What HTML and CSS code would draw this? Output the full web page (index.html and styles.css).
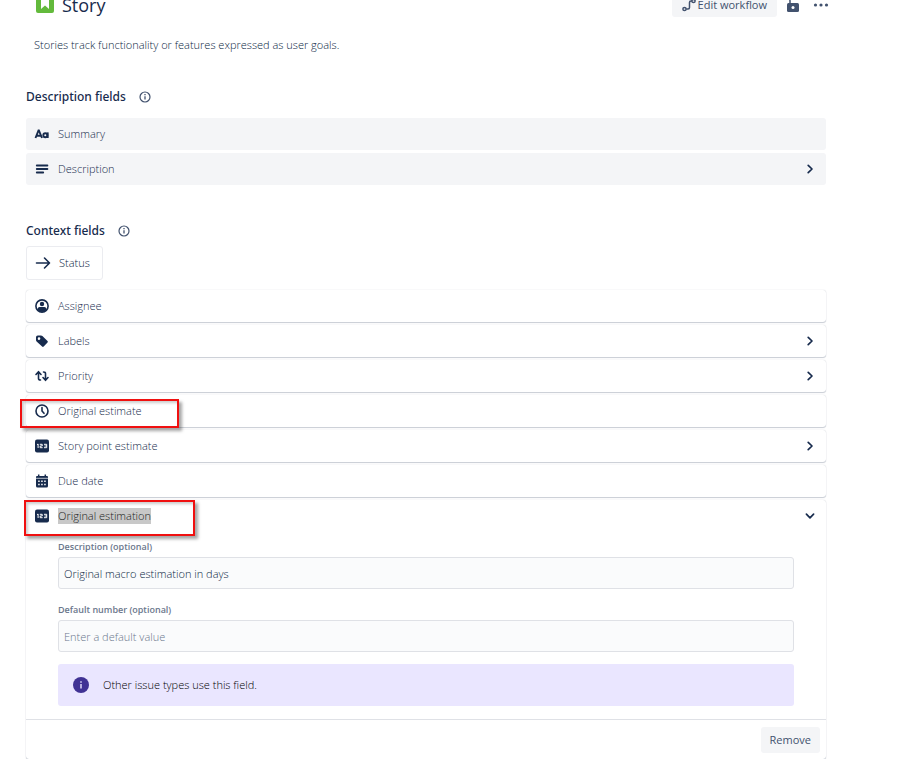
FILE: index.html
```html
<!DOCTYPE html>
<html lang="en">
<head>
<meta charset="utf-8">
<title>Story issue type</title>
<link rel="stylesheet" href="styles.css">
</head>
<body>
<svg class="defs" aria-hidden="true">
  <symbol id="info" viewBox="0 0 14 14"><circle cx="7" cy="7" r="5" fill="none" stroke="currentColor" stroke-width="1.2"/><path d="M7 6.3v3.2M7 4v1.2" stroke="currentColor" stroke-width="1.3"/></symbol>
  <symbol id="right" viewBox="0 0 12 12"><path d="M4.2 2.4 8 6 4.2 9.6" fill="none" stroke="currentColor" stroke-width="1.7" stroke-linecap="round" stroke-linejoin="round"/></symbol>
  <symbol id="down" viewBox="0 0 12 12"><path d="M2.4 4.2 6 7.8 9.6 4.2" fill="none" stroke="currentColor" stroke-width="1.7" stroke-linecap="round" stroke-linejoin="round"/></symbol>
  <symbol id="number" viewBox="0 0 16 16"><rect x="1" y="1.500" width="14" height="13" rx="2" fill="currentColor"/><path d="M3 6.700 4.100 6v4M5.800 6.300h2.400v1.700H6.200v1.700h2.400M10 6.300h2.700v3.400H10M10.500 8h2" fill="none" stroke="#fff" stroke-width="1"/></symbol>
</svg>
<main class="page">
  <header class="top">
    <svg class="story" viewBox="0 0 18 18"><rect width="18" height="18" rx="2" fill="#63ba3c"/><path d="M5 4h8v10l-4-3.500L5 14z" fill="#fff"/></svg>
    <h1>Story</h1>
    <button class="btn workflow"><svg viewBox="0 0 14 14"><g fill="none" stroke="currentColor" stroke-width="1.500"><circle cx="2.500" cy="11" r="1.600"/><circle cx="11.500" cy="3" r="1.600"/><path d="M4.200 11H6q1.500 0 1.500-1.500v-5Q7.500 3 9 3h1"/></g></svg>Edit workflow</button>
    <button class="tool" aria-label="Unlock"><svg viewBox="0 0 16 16"><rect x="2" y="6" width="12" height="9" rx="1.500" fill="currentColor"/><path d="M5 6V4a3 3 0 0 1 6-1" fill="none" stroke="currentColor" stroke-width="1.500"/><circle cx="8" cy="10.500" r="1.500" fill="#fff"/></svg></button>
    <button class="tool" aria-label="More"><svg viewBox="0 0 16 16" fill="currentColor"><circle cx="2.500" cy="8" r="1.600"/><circle cx="8" cy="8" r="1.600"/><circle cx="13.500" cy="8" r="1.600"/></svg></button>
  </header>
  <p class="intro">Stories track functionality or features expressed as user goals.</p>

  <section class="description">
    <h2>Description fields <svg><use href="#info"/></svg></h2>
    <ul class="rows">
      <li class="row flat"><svg class="icon" viewBox="0 0 16 16"><g fill="none" stroke="currentColor" stroke-width="1.900"><path d="M1.500 12 4.500 4.500h.4L8 12M2.700 9.700h4.200"/><circle cx="11.300" cy="9.300" r="2"/><path d="M13.700 6.400v5.600"/></g></svg>Summary</li>
      <li class="row flat"><svg class="icon" viewBox="0 0 16 16"><path d="M2.800 4.500h10.600M2.800 8h10.600M2.800 11.500h6.400" stroke="currentColor" stroke-width="1.900" stroke-linecap="round"/></svg>Description<button class="toggle" aria-label="Expand Description"><svg><use href="#right"/></svg></button></li>
    </ul>
  </section>

  <section class="context">
    <h2>Context fields <svg><use href="#info"/></svg></h2>
    <div class="status"><svg class="icon" viewBox="0 0 16 16"><path d="M1.500 8h13M9.500 3l5 5-5 5" fill="none" stroke="currentColor" stroke-width="1.600" stroke-linecap="round" stroke-linejoin="round"/></svg>Status</div>
    <ul class="rows">
      <li class="row card"><svg class="icon" viewBox="0 0 16 16"><circle cx="8" cy="8" r="6.100" fill="none" stroke="currentColor" stroke-width="1.600"/><circle cx="8" cy="6" r="2.200" fill="currentColor"/><path d="M3.800 12V10.500Q3.800 9 5.500 9h5q1.700 0 1.700 1.500V12Q8 16 3.800 12" fill="currentColor"/></svg>Assignee</li>
      <li class="row card"><svg class="icon" viewBox="0 0 16 16"><path fill-rule="evenodd" d="M2 4.200Q2 2.500 3.700 2.500H7q.8 0 1.400.6l5.100 4.800q.8.800 0 1.600l-3.800 4q-.8.800-1.600 0L2.600 8.400Q2 7.800 2 7zM5 4.300a1.300 1.300 0 1 0 .1 2.600A1.300 1.300 0 0 0 5 4.300" fill="currentColor"/></svg>Labels<button class="toggle" aria-label="Expand Labels"><svg><use href="#right"/></svg></button></li>
      <li class="row card"><svg class="icon" viewBox="0 0 16 16"><path d="M4.500 4v6.500q0 1.500 2 1.500M2 6.500l2.500-2.800L7 6.500M11.500 12V5.500Q11.500 4 9.500 4M9 9.500l2.500 2.800L14 9.500" fill="none" stroke="currentColor" stroke-width="1.600" stroke-linecap="round" stroke-linejoin="round"/></svg>Priority<button class="toggle" aria-label="Expand Priority"><svg><use href="#right"/></svg></button></li>
      <li class="row card"><svg class="icon" viewBox="0 0 16 16"><g fill="none" stroke="currentColor" stroke-width="1.600" stroke-linecap="round"><circle cx="8" cy="8" r="6"/><path d="M8 4.500V8l2 2.300"/></g></svg>Original estimate<span class="mark mark-estimate"></span></li>
      <li class="row card"><svg class="icon"><use href="#number"/></svg>Story point estimate<button class="toggle" aria-label="Expand Story point estimate"><svg><use href="#right"/></svg></button></li>
      <li class="row card"><svg class="icon" viewBox="0 0 16 16"><path d="M2 4q0-1 1-1h10q1 0 1 1v9q0 1.500-1.500 1.500h-9Q2 14.500 2 13z" fill="currentColor"/><path d="M4.700 1.500v3M11.300 1.500v3" stroke="currentColor" stroke-width="1.500"/><path d="M1.500 5.300h13" stroke="#fff" stroke-width=".7"/><path d="M4.200 8.200h8M4.200 11.500h8" stroke="#fff" stroke-width="1.500" stroke-dasharray="1.500 1.500"/></svg>Due date</li>
      <li class="card panel">
        <div class="row"><svg class="icon"><use href="#number"/></svg><span class="selected">Original estimation</span><button class="toggle" aria-label="Collapse Original estimation"><svg><use href="#down"/></svg></button><span class="mark mark-estimation"></span></div>
        <div class="form">
          <label for="desc">Description (optional)</label>
          <input id="desc" type="text" value="Original macro estimation in days">
          <label for="num">Default number (optional)</label>
          <input id="num" type="text" placeholder="Enter a default value">
          <div class="notice"><svg viewBox="0 0 16 16"><circle cx="8" cy="8" r="8" fill="#403294"/><path d="M8 7v4.500M8 4.300v1.500" stroke="#eae6ff" stroke-width="1.400"/></svg>Other issue types use this field.</div>
        </div>
        <footer><button class="btn">Remove</button></footer>
      </li>
    </ul>
  </section>
</main>
</body>
</html>
```
FILE: styles.css
```css
* { box-sizing: border-box; }
body {
  margin: 0;
  overflow: hidden;
  background: #fff;
  color: #091e42;
  font: 300 11px/18px "Open Sans", "Noto Sans", sans-serif;
}
.defs { position: absolute; width: 0; height: 0; }
svg { flex: none; display: block; }
button, input { font: inherit; color: inherit; }
ul { list-style: none; margin: 0; padding: 0; }

/* The view is scrolled so that the title bar is partly out of sight. */
.page { margin-top: -8px; padding: 0 87px 0 26px; }

.top { display: flex; align-items: center; height: 26px; padding-left: 10px; margin-right: -3px; }
.story { width: 18px; height: 18px; margin-bottom: 2px; }
h1 { flex: 1; margin: 0 0 0 8px; color: #172b4d; font-size: 18px; line-height: 26px; font-weight: 500; }
.btn {
  display: flex;
  align-items: center;
  gap: 2px;
  height: 26px;
  padding: 0 9px;
  border: 0;
  border-radius: 3px;
  background: #f4f5f7;
  color: #42526e;
  font-weight: 500;
}
.workflow { height: 24px; padding: 0 10px; }
.btn svg { width: 14px; height: 14px; }
.tool { margin-left: 8px; padding: 0; border: 0; background: none; color: #42526e; }
.tool + .tool { margin-left: 12px; }
.tool svg { width: 16px; height: 16px; }

.intro { margin: 18px 0 0 8px; }
h2 { display: flex; align-items: center; gap: 12px; margin: 0; color: #172b4d; font: 500 12px/20px "Noto Sans", "Open Sans", sans-serif; }
h2 svg { width: 14px; height: 14px; color: #42526e; }
.description { margin-top: 33px; }
.description .rows { margin-top: 11px; }
.context { margin-top: 36px; }

.rows { display: flex; flex-direction: column; gap: 3px; }
.row { position: relative; display: flex; align-items: center; height: 32px; padding: 0 10px 0 8px; color: #172b4d; }
.flat { border-radius: 3px; background: #f4f5f7; }
.icon { width: 16px; height: 16px; margin-right: 8px; color: #172b4d; }
.card { border-radius: 3px; background: #fff; box-shadow: 0 1px 1px rgba(9, 30, 66, .2), 0 0 1px rgba(9, 30, 66, .25); }
.toggle { margin-left: auto; padding: 0; border: 0; background: none; color: #172b4d; }
.toggle svg { width: 12px; height: 12px; }
.status {
  display: inline-flex;
  align-items: center;
  height: 34px;
  margin: 5px 0 10px;
  padding: 0 12px 0 8px;
  border: 1px solid #ebecf0;
  border-radius: 3px;
}

.selected { background: #c8c8c8; color: #222; line-height: 16px; }
.mark { position: absolute; border: 2px solid #f01010; box-shadow: 3px 3px 3px rgba(0, 0, 0, .35), inset 2px 2px 3px rgba(0, 0, 0, .2); z-index: 1; pointer-events: none; }
.mark-estimate { left: -6px; top: 4px; width: 159px; height: 29px; }
.mark-estimation { left: -2px; top: 0; width: 171px; height: 36px; }

.form { padding: 7px 32px 13px; }
label { display: block; margin-bottom: 2px; font-size: 9px; line-height: 16px; font-weight: 600; color: #6b778c; }
input {
  display: block;
  width: 100%;
  height: 32px;
  margin-bottom: 13px;
  padding: 0 5px;
  border: 1px solid #dfe1e6;
  border-radius: 3px;
  background: #fafbfc;
}
input::placeholder { color: #6b778c; opacity: 1; }
input:last-of-type { margin-bottom: 12px; }
.notice { display: flex; align-items: center; gap: 14px; height: 42px; padding: 0 15px; border-radius: 3px; background: #eae6ff; color: #000; }
.notice svg { width: 16px; height: 16px; }
footer { display: flex; justify-content: flex-end; padding: 7px 6px 6px; border-top: 1px solid #dfe1e6; }
```
